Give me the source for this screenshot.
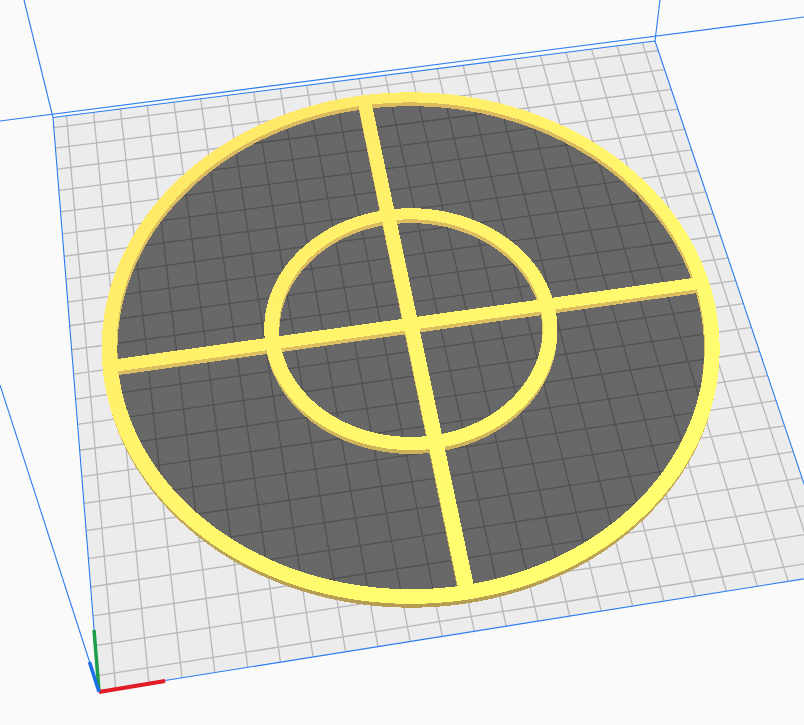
import React from 'react';

// plate corners on screen (tl, tr, br, bl), plate is 230 units wide, grid every 10 from 5
const TL = [53, 117.5], TR = [655, 41], BR = [834.4, 574], BL = [99, 691];
const NADIR = [430, 1656];
const SIZE = 230;
const CU = 115, CV = 115.4;

function homography() {
  const [x0, y0] = TL, [x1, y1] = TR, [x2, y2] = BR, [x3, y3] = BL;
  const dx1 = x1 - x2, dx2 = x3 - x2, sx = x0 - x1 + x2 - x3;
  const dy1 = y1 - y2, dy2 = y3 - y2, sy = y0 - y1 + y2 - y3;
  const det = dx1 * dy2 - dx2 * dy1;
  const g = (sx * dy2 - dx2 * sy) / det;
  const h = (dx1 * sy - sx * dy1) / det;
  const a = x1 - x0 + g * x1, b = x3 - x0 + h * x3;
  const d = y1 - y0 + g * y1, e = y3 - y0 + h * y3;
  return (u, v) => {
    const s = u / SIZE, t = v / SIZE;
    const w = g * s + h * t + 1;
    return [(a * s + b * t + x0) / w, (d * s + e * t + y0) / w];
  };
}

const H = homography();

// lift a floor point away from the nadir by h pixels
function lift(p, h) {
  const dx = p[0] - NADIR[0], dy = p[1] - NADIR[1];
  const len = Math.hypot(dx, dy);
  return [p[0] + (dx / len) * h, p[1] + (dy / len) * h];
}
const pt = (u, v, h) => lift(H(u, v), h);
const fmt = (p) => `${p[0].toFixed(2)} ${p[1].toFixed(2)}`;
const line = (a, b) => `M${fmt(a)}L${fmt(b)}`;

function circle(r, h) {
  const out = [];
  for (let i = 0; i < 180; i++) {
    const a = (i / 180) * Math.PI * 2;
    out.push(fmt(pt(CU + r * Math.cos(a), CV + r * Math.sin(a), h)));
  }
  return `M${out.join('L')}Z`;
}

function rect(u0, v0, u1, v1, h) {
  return `M${[[u0, v0], [u1, v0], [u1, v1], [u0, v1]].map(([u, v]) => fmt(pt(u, v, h))).join('L')}Z`;
}

function model(h) {
  return [
    circle(105, h) + circle(100, h),
    circle(50, h) + circle(45, h),
    rect(CU - 2.5, CV - 103, CU + 2.5, CV + 103, h),
    rect(CU - 103, CV - 2.5, CU + 103, CV + 2.5, h),
  ];
}

function gridPath(from, step) {
  let d = '';
  for (let i = from; i <= SIZE; i += step) {
    d += line(H(i, 0), H(i, SIZE)) + line(H(0, i), H(SIZE, i));
  }
  return d;
}

const LAYERS = [0, 1, 2, 3];
const TOP = 3.8;

export default function App() {
  return (
    <div className="h-screen w-full overflow-hidden bg-[#fafafa]">
      <svg width="804" height="725" viewBox="0 0 804 725" className="block">
        <defs>
          <linearGradient id="top" gradientUnits="userSpaceOnUse" x1="150" y1="100" x2="500" y2="600">
            <stop offset="0" stopColor="#ffe566" />
            <stop offset="0.45" stopColor="#fff46b" />
            <stop offset="1" stopColor="#ffff70" />
          </linearGradient>
          <linearGradient id="wall" gradientUnits="userSpaceOnUse" x1="400" y1="100" x2="400" y2="610">
            <stop offset="0" stopColor="#dcb95f" />
            <stop offset="0.5" stopColor="#dcc062" />
            <stop offset="1" stopColor="#b59c52" />
          </linearGradient>
        </defs>

        {/* build plate */}
        <polygon points={[TL, TR, BR, BL].map(fmt).join(' ')} fill="#ebebeb" />
        <path d={gridPath(0, 1)} stroke="#f0f0f0" strokeWidth="0.45" fill="none" />
        <path d={gridPath(5, 10)} stroke="#b8b8b8" strokeWidth="1.3" fill="none" />

        {/* shadow under the part */}
        <path d={circle(103, 0)} fill="#000000" fillOpacity="0.56" />

        {/* part walls then top */}
        {LAYERS.map((h) =>
          model(h).map((d, i) => <path key={`${h}-${i}`} d={d} fill="url(#wall)" fillRule="evenodd" shapeRendering="crispEdges" />)
        )}
        {model(TOP).map((d, i) => (
          <path key={i} d={d} fill="url(#top)" fillRule="evenodd" shapeRendering="crispEdges" />
        ))}

        {/* build volume */}
        <g stroke="#2b7df0" strokeWidth="1.1" fill="none">
          <path d={line(TL, TR) + line(TR, BR) + line(BL, BR) + line(TL, BL)} />
          <path d={line([0, 121], [804, 17])} />
          <path d={line([24, 0], TL)} />
          <path d={line([660, 0], TR)} />
          <path d={line([0, 385], BL)} />
        </g>

        {/* axes */}
        <path d={line([99, 691], [94, 630])} stroke="#1f9e49" strokeWidth="3.5" />
        <path d={line([99, 692], [165, 681])} stroke="#e01b24" strokeWidth="4" />
        <path d={line([99, 692], [89.5, 662])} stroke="#1a6fe8" strokeWidth="3.5" />
      </svg>
    </div>
  );
}
